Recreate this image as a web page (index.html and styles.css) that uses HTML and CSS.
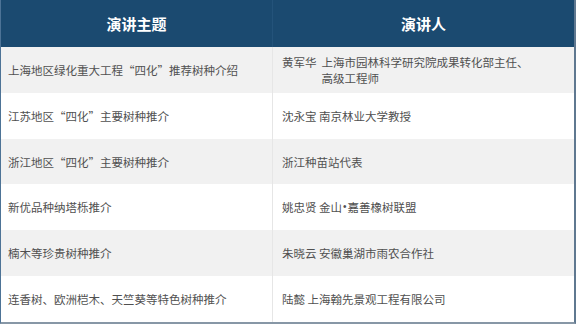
FILE: index.html
```html
<!DOCTYPE html>
<html lang="zh">
<head>
<meta charset="utf-8">
<link rel="stylesheet" href="styles.css">
</head>
<body>
<div class="table">
  <div class="head">
    <div class="th">演讲主题</div>
    <div class="th">演讲人</div>
  </div>
  <div class="row odd">
    <div class="td">上海地区绿化重大工程“四化”推荐树种介绍</div>
    <div class="td two"><span class="name">黄军华</span><span class="org">上海市园林科学研究院成果转化部主任、<br>高级工程师</span></div>
  </div>
  <div class="row">
    <div class="td">江苏地区“四化”主要树种推介</div>
    <div class="td">沈永宝 南京林业大学教授</div>
  </div>
  <div class="row odd">
    <div class="td">浙江地区“四化”主要树种推介</div>
    <div class="td">浙江种苗站代表</div>
  </div>
  <div class="row">
    <div class="td">新优品种纳塔栎推介</div>
    <div class="td">姚忠贤 金山<span class="dot">•</span>嘉善橡树联盟</div>
  </div>
  <div class="row odd">
    <div class="td">楠木等珍贵树种推介</div>
    <div class="td">朱晓云 安徽巢湖市雨农合作社</div>
  </div>
  <div class="row">
    <div class="td">连香树、欧洲桤木、天竺葵等特色树种推介</div>
    <div class="td">陆懿 上海翰先景观工程有限公司</div>
  </div>
</div>
</body>
</html>
```
FILE: styles.css
```css
html, body {
  margin: 0;
  padding: 0;
  background: #ffffff;
}
body {
  font-family: "Noto Sans CJK SC", "Noto Sans", sans-serif;
}
.table {
  width: 576px;
  height: 324px;
  box-sizing: border-box;
  border-left: 1px solid #4d7396;
  border-right: 2px solid #5f7890;
  border-bottom: 2px solid #8797a6;
  display: flex;
  flex-direction: column;
}
.head {
  height: 47px;
  background: #1b4a70;
  display: grid;
  grid-template-columns: 272px 1fr;
}
.th {
  color: #ffffff;
  font-size: 15px;
  font-weight: 700;
  display: flex;
  align-items: center;
  justify-content: center;
  border-right: 1px solid #24537a;
}
.th:last-child {
  border-right: none;
}
.row {
  height: 46px;
  display: grid;
  grid-template-columns: 272px 1fr;
  background: #ffffff;
}
.row.odd {
  background: #f1f1f1;
}
.td {
  color: #505050;
  font-size: 11.5px;
  line-height: 16px;
  display: flex;
  align-items: center;
  padding-left: 7px;
  border-right: 1px solid #e6e6e6;
  white-space: pre;
}
.td:last-child {
  border-right: none;
  padding-left: 9px;
}
.td.two {
  white-space: normal;
  align-items: flex-start;
  padding-top: 7px;
  box-sizing: border-box;
}
.name {
  margin-right: 5px;
}
.org {
  display: block;
}
.dot {
  font-family: "Liberation Sans", sans-serif;
  font-size: 10px;
  margin: 0 1px;
}
```
